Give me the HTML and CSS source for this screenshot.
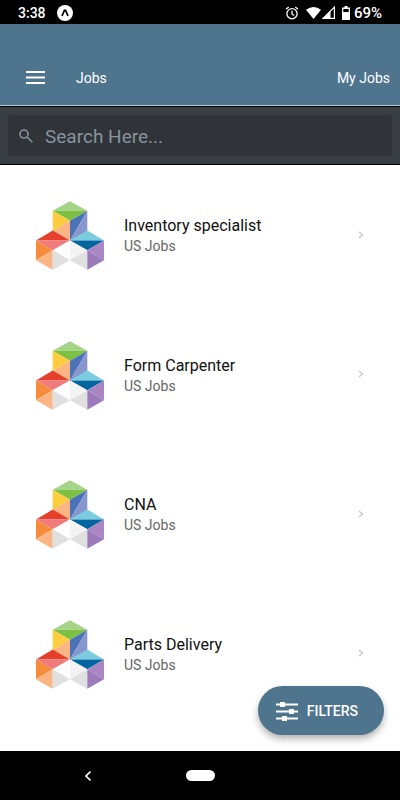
FILE: index.html
```html
<!DOCTYPE html>
<html lang="en">
<head>
    <meta charset="UTF-8">
    <meta name="viewport" content="width=device-width, initial-scale=1.0">
    <title>Jobs</title>
    <link rel="stylesheet" href="styles.css">
</head>
<body>
    <!-- Logo shared by every row -->
    <svg class="symbols" aria-hidden="true">
        <symbol id="logo" viewBox="32 34 204 206">
            <polygon fill="#a5d387" points="134,34 186,63 82,63"/>
            <polygon fill="#7cc143" points="82,63 186,63 134,93"/>
            <polygon fill="#fdcd3f" points="82,63 134,93 82,124"/>
            <polygon fill="#fbb584" points="134,93 134,152 82,124"/>
            <polygon fill="#4c72b8" points="134,93 186,63 134,152"/>
            <polygon fill="#8797ce" points="186,63 186,124 134,152"/>
            <polygon fill="#e5402b" points="82,122 134,152 32,152"/>
            <polygon fill="#f07b7c" points="32,152 134,152 82,181"/>
            <polygon fill="#f68b3c" points="32,152 82,181 32,211"/>
            <polygon fill="#fbb584" points="32,211 82,181 82,240"/>
            <polygon fill="#fdfdfd" points="82,181 134,152 134,211"/>
            <polygon fill="#e0e0e0" points="82,181 134,211 82,240"/>
            <polygon fill="#7accde" points="186,122 236,152 134,152"/>
            <polygon fill="#0365a0" points="134,152 236,152 186,181"/>
            <polygon fill="#f3f3f3" points="134,152 186,181 134,211"/>
            <polygon fill="#e0e0e0" points="186,181 186,240 134,211"/>
            <polygon fill="#aa86c2" points="236,152 236,211 186,181"/>
            <polygon fill="#9b7bbb" points="186,181 236,211 186,240"/>
        </symbol>
        <symbol id="chevron" viewBox="0 0 6 8">
            <path d="M1 1l3.5 3L1 7" fill="none" stroke="currentColor" stroke-width="1.2"/>
        </symbol>
    </svg>

    <div class="app">
        <div class="status-bar">
            <span class="time">3:38</span>
            <svg class="notification" viewBox="0 0 16 16" width="16" height="16">
                <circle cx="8" cy="8" r="8" fill="#fff"/>
                <path d="M5 11L7.4 5.4h1.2L11 11" fill="none" stroke="#000" stroke-width="1.7"/>
            </svg>
            <div class="status-icons">
                <svg viewBox="0 0 14 14" width="14" height="14" fill="none" stroke="#fff" stroke-width="1.3">
                    <circle cx="7" cy="7.7" r="5.1"/>
                    <path d="M7 4.8V8l2.2 1.5M1 3.3l2.7-2.2M13 3.3l-2.7-2.2"/>
                </svg>
                <svg class="wifi" viewBox="0 0 15 12" width="15" height="12">
                    <path d="M0 2.8Q7.5-2.8 15 2.8L7.5 12z" fill="#fff"/>
                </svg>
                <svg class="signal" viewBox="0 0 13 13" width="13" height="13">
                    <path d="M12.4 1.2v11.2H1.3z" fill="none" stroke="#fff" stroke-width="1.2"/>
                    <path d="M8.5 4.5V13H0z" fill="#fff"/>
                </svg>
                <svg class="battery" viewBox="0 0 8 14" width="8" height="14">
                    <path d="M2.5 0h3v1.5H8V14H0V1.5h2.5z" fill="#fff"/>
                    <path d="M1.3 3h5.4v3H1.3z" fill="#000"/>
                </svg>
                <span class="percent">69%</span>
            </div>
        </div>

        <header class="header">
            <button class="menu-btn" type="button" aria-label="Menu">
                <svg viewBox="0 0 19 13" width="19" height="13" fill="#fff">
                    <path d="M0 0h19v2H0zM0 5.5h19v2H0zM0 11h19v2H0z"/>
                </svg>
            </button>
            <h1 class="title">Jobs</h1>
            <a class="my-jobs" href="#">My Jobs</a>
        </header>

        <form class="search" role="search">
            <label class="search-box">
                <svg viewBox="0 0 14 14" width="14" height="14" fill="none" stroke="#86939e" stroke-width="1.6">
                    <circle cx="5" cy="5" r="4"/>
                    <path d="M8 8l5.3 5.3"/>
                </svg>
                <input class="search-input" type="text" placeholder="Search Here..." aria-label="Search">
            </label>
        </form>

        <main class="job-list">
            <a class="job" href="#">
                <svg class="logo"><use href="#logo"/></svg>
                <div class="job-text">
                    <div class="job-title">Inventory specialist</div>
                    <div class="job-source">US Jobs</div>
                </div>
                <svg class="chevron"><use href="#chevron"/></svg>
            </a>
            <a class="job" href="#">
                <svg class="logo"><use href="#logo"/></svg>
                <div class="job-text">
                    <div class="job-title">Form Carpenter</div>
                    <div class="job-source">US Jobs</div>
                </div>
                <svg class="chevron"><use href="#chevron"/></svg>
            </a>
            <a class="job" href="#">
                <svg class="logo"><use href="#logo"/></svg>
                <div class="job-text">
                    <div class="job-title">CNA</div>
                    <div class="job-source">US Jobs</div>
                </div>
                <svg class="chevron"><use href="#chevron"/></svg>
            </a>
            <a class="job" href="#">
                <svg class="logo"><use href="#logo"/></svg>
                <div class="job-text">
                    <div class="job-title">Parts Delivery</div>
                    <div class="job-source">US Jobs</div>
                </div>
                <svg class="chevron"><use href="#chevron"/></svg>
            </a>

            <button class="filters-btn" type="button">
                <svg viewBox="0 0 22 20" width="22" height="20" fill="#fff">
                    <path d="M0 2.5h22v2H0zM0 9.5h22v2H0zM0 16.5h22v2H0z"/>
                    <path d="M4 1h5v5H4zM13 8h5v5h-5zM6 15h5v5H6z"/>
                </svg>
                FILTERS
            </button>
        </main>

        <nav class="nav-bar">
            <button class="back-btn" type="button" aria-label="Back">
                <svg viewBox="0 0 8 12" width="8" height="12" fill="none" stroke="#fff" stroke-width="1.7">
                    <path d="M6.5 1.5L2 6l4.5 4.5"/>
                </svg>
            </button>
            <button class="home-btn" type="button" aria-label="Home"></button>
        </nav>
    </div>
</body>
</html>
```
FILE: styles.css
```css
* {
    box-sizing: border-box;
}

body {
    margin: 0;
    font-family: Roboto, sans-serif;
    background: #fff;
}

button {
    padding: 0;
    border: none;
    background: none;
    font-family: inherit;
    cursor: pointer;
}

a {
    color: inherit;
    text-decoration: none;
}

svg {
    display: block;
    flex-shrink: 0;
}

.symbols {
    position: absolute;
    width: 0;
    height: 0;
}

.app {
    display: flex;
    flex-direction: column;
    min-height: 100vh;
}

/* status bar */
.status-bar {
    display: flex;
    align-items: center;
    height: 24px;
    padding: 1px 18px 0;
    background: #000;
    color: #fff;
    font-size: 14px;
    font-weight: 500;
}

.notification {
    margin-left: 11px;
}

.status-icons {
    display: flex;
    align-items: center;
    margin-left: auto;
}

.wifi {
    margin: 0 1px 0 7px;
}

.battery {
    margin: 0 4px 0 7px;
}

.percent {
    font-size: 15px;
}

/* header */
.header {
    display: flex;
    align-items: center;
    height: 82px;
    padding: 26px 10px 0 26px;
    border-bottom: 1px solid #b5c9d2;
    background: #4e748e;
    color: #fff;
    font-size: 14px;
}

.title {
    margin: 0 0 0 31px;
    font-size: 14px;
    font-weight: 400;
}

.my-jobs {
    margin-left: auto;
}

/* search */
.search {
    padding: 8px;
    border-top: 1px solid #000;
    border-bottom: 1px solid #000;
    background: #393e42;
}

.search-box {
    display: flex;
    align-items: center;
    gap: 12px;
    height: 41px;
    padding: 0 10px 0 11px;
    border-radius: 3px;
    background: #303337;
}

.search-input {
    flex: 1;
    min-width: 0;
    padding: 2px 0 0;
    border: none;
    outline: none;
    background: none;
    color: #86939e;
    font-family: inherit;
    font-size: 19px;
}

.search-input::placeholder {
    color: #86939e;
}

/* list */
.job-list {
    position: relative;
    display: flex;
    flex: 1;
    flex-direction: column;
    padding-bottom: 28px;
}

.job {
    display: flex;
    flex: 1;
    align-items: center;
    padding: 0 36px;
}

.logo {
    width: 68px;
    height: 69px;
    margin-top: 2px;
}

.job-text {
    flex: 1;
    margin-left: 20px;
    padding-top: 3px;
}

.job-title {
    color: #111;
    font-size: 16px;
    line-height: 20px;
}

.job-source {
    color: #666;
    font-size: 14px;
    line-height: 20px;
}

.chevron {
    width: 6px;
    height: 8px;
    color: #c4c4cc;
}

.filters-btn {
    position: absolute;
    right: 16px;
    bottom: 16px;
    display: flex;
    align-items: center;
    gap: 9px;
    height: 49px;
    padding: 0 26px 0 18px;
    border-radius: 25px;
    background: #4e748e;
    box-shadow: 0 4px 7px rgba(0, 0, 0, 0.3);
    color: #fff;
    font-size: 14px;
    font-weight: 500;
}

/* navigation bar */
.nav-bar {
    display: grid;
    grid-template-columns: 1fr auto 1fr;
    align-items: center;
    height: 49px;
    background: #000;
}

.back-btn {
    justify-self: center;
    margin-right: 10px;
}

.home-btn {
    width: 29px;
    height: 11px;
    border-radius: 6px;
    background: #fff;
}
```
